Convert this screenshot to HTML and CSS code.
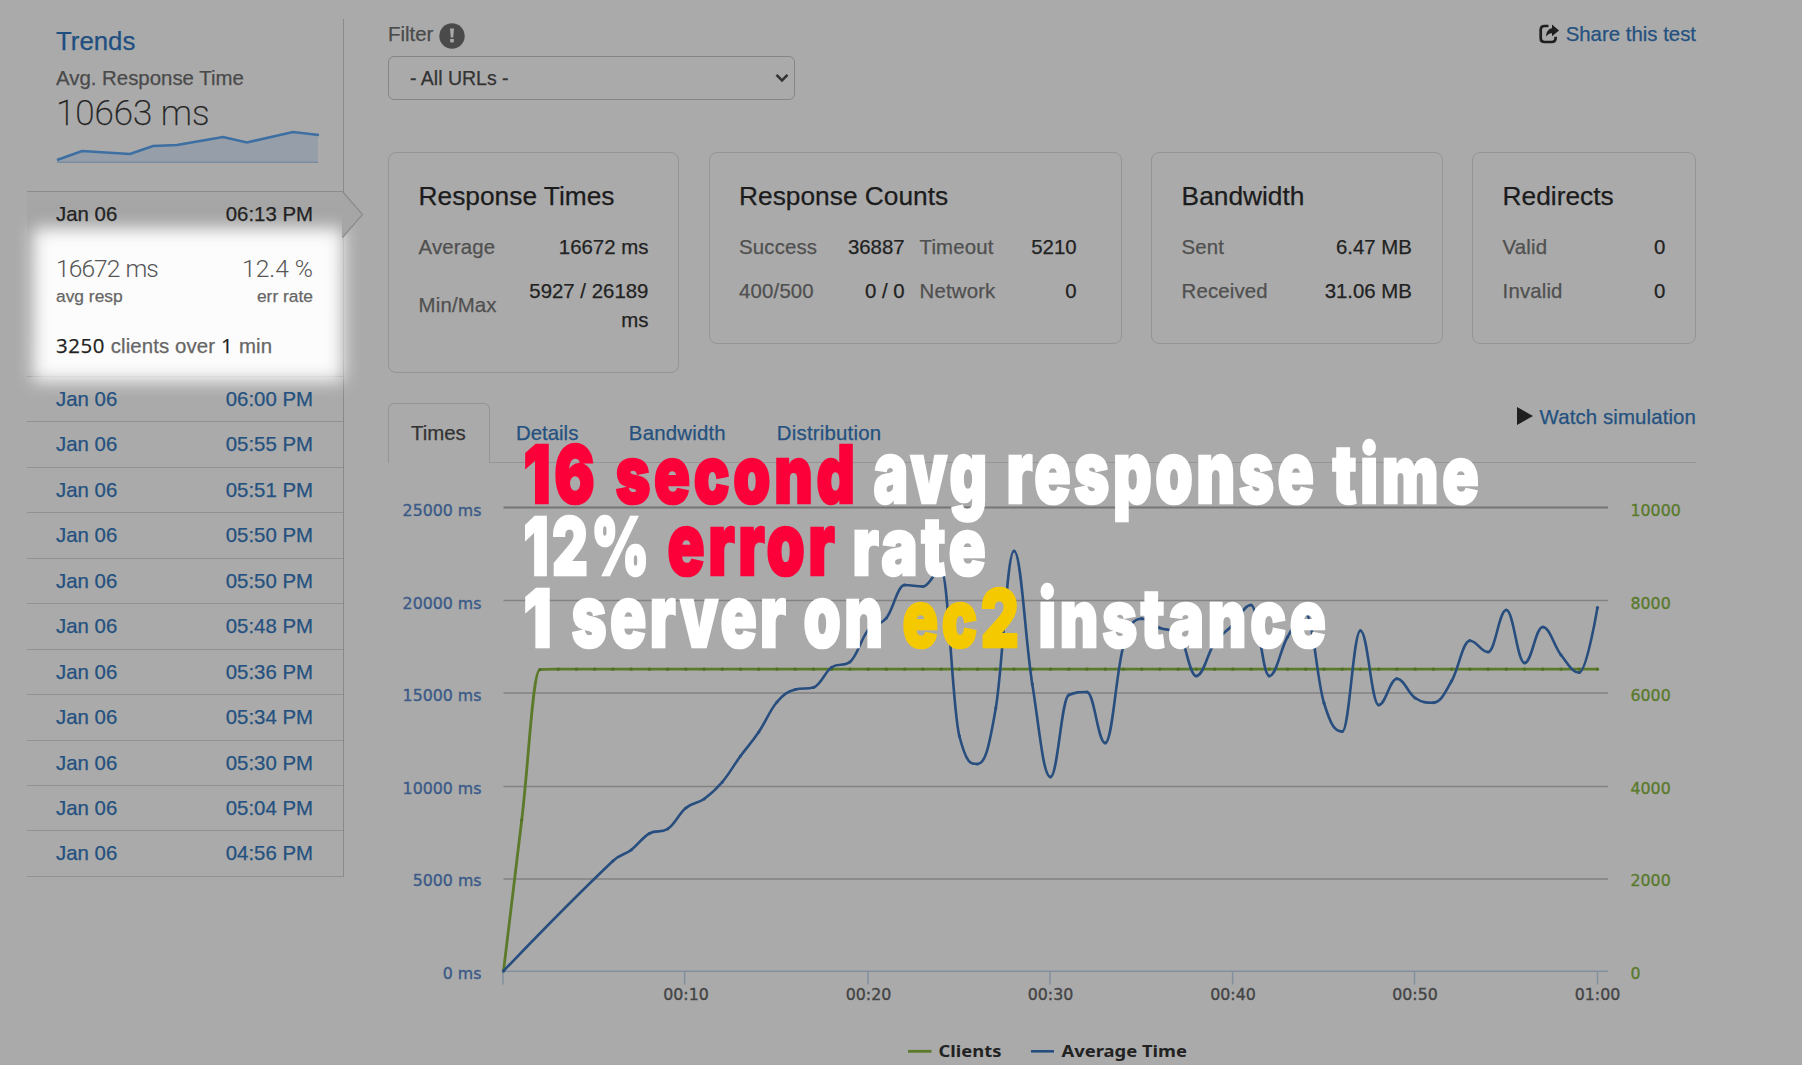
FILE: index.html
```html
<!DOCTYPE html>
<html lang="en">
<head>
<meta charset="utf-8">
<title>Load test results</title>
<link rel="stylesheet" href="styles.css">
</head>
<body>
<div class="page">
  <aside class="sidebar">
    <section class="trends">
      <h2 class="trends-title">Trends</h2>
      <div class="trends-label">Avg. Response Time</div>
      <div class="trends-value">10663 ms</div>
      <svg class="sparkline" width="264" height="34" viewBox="56 130 264 34">
        <path class="spark-area" d="M57 160 82 151 130 154 153 146 177 145 200 141 223 137 247 142.500 293 132 318 135V162.500H57Z"/>
        <path class="spark-base" d="M57 162.300H318"/>
        <path class="spark-line" d="M57 160 82 151 130 154 153 146 177 145 200 141 223 137 247 142.500 293 132 319 135"/>
      </svg>
    </section>
    <section class="run-active">
      <div class="spotlight"></div>
      <svg class="run-arrow" width="22" height="48" viewBox="0 0 22 48"><path class="arrow-fill" d="M0 .5 20.500 23.500 0 46.500Z"/><path class="arrow-line" d="M.5 .5 20.500 23.500 .5 46.500"/></svg>
      <div class="run-line run-head"><span>Jan 06</span><span>06:13 PM</span></div>
      <div class="run-line run-stats"><span>16672 ms</span><span class="rate">12.4 %</span></div>
      <div class="run-line run-captions"><span>avg resp</span><span>err rate</span></div>
      <div class="run-clients"><b>3250</b> clients over <b>1</b> min</div>
    </section>
    <div class="runs">
      <a class="run"><span>Jan 06</span><span>06:00 PM</span></a>
      <a class="run"><span>Jan 06</span><span>05:55 PM</span></a>
      <a class="run"><span>Jan 06</span><span>05:51 PM</span></a>
      <a class="run"><span>Jan 06</span><span>05:50 PM</span></a>
      <a class="run"><span>Jan 06</span><span>05:50 PM</span></a>
      <a class="run"><span>Jan 06</span><span>05:48 PM</span></a>
      <a class="run"><span>Jan 06</span><span>05:36 PM</span></a>
      <a class="run"><span>Jan 06</span><span>05:34 PM</span></a>
      <a class="run"><span>Jan 06</span><span>05:30 PM</span></a>
      <a class="run"><span>Jan 06</span><span>05:04 PM</span></a>
      <a class="run"><span>Jan 06</span><span>04:56 PM</span></a>
    </div>
  </aside>

  <main class="main">
    <header class="top">
      <div class="filter">
        <div class="filter-label">Filter
          <svg width="26" height="26" viewBox="0 0 26 26"><circle cx="13" cy="13" r="12.700" fill="#4a4a4a"/><path fill="#aaa" d="M11 5.500h4l-.8 9h-2.400z"/><rect x="11.200" y="16" width="3.600" height="3.400" fill="#aaa"/></svg>
        </div>
        <div class="select"><span>- All URLs -</span>
          <svg width="14" height="10" viewBox="0 0 14 10"><path d="M1.500 1.800 7 7.300 12.500 1.800" fill="none" stroke="#333" stroke-width="2.600"/></svg>
        </div>
      </div>
      <a class="action">
        <svg width="20" height="20" viewBox="0 0 20 20"><path d="M9.500 2H5.500Q1.700 2 1.700 5.800V14.200Q1.700 18 5.500 18H12.500Q16.600 18 16.600 14V12.800" fill="none" stroke="#1f1f1f" stroke-width="2.700"/><path d="M13 .6 20 6.500 13 12.300V9.200C10.500 9 8.600 10.200 7.200 12.800 7 8 9.500 4.600 13 4.200Z" fill="#1f1f1f"/></svg>
        <span>Share this test</span>
      </a>
    </header>

    <section class="cards">
      <div class="card card-times">
        <h4>Response Times</h4>
        <div class="grid2">
          <span class="label">Average</span><span class="value">16672 ms</span>
          <span class="label">Min/Max</span><span class="value">5927 / 26189 ms</span>
        </div>
      </div>
      <div class="card card-counts">
        <h4>Response Counts</h4>
        <div class="grid4">
          <span class="label">Success</span><span class="value">36887</span><span class="label second">Timeout</span><span class="value">5210</span>
          <span class="label">400/500</span><span class="value">0 / 0</span><span class="label second">Network</span><span class="value">0</span>
        </div>
      </div>
      <div class="card card-bandwidth">
        <h4>Bandwidth</h4>
        <div class="grid2">
          <span class="label">Sent</span><span class="value">6.47 MB</span>
          <span class="label">Received</span><span class="value">31.06 MB</span>
        </div>
      </div>
      <div class="card card-redirects">
        <h4>Redirects</h4>
        <div class="grid2">
          <span class="label">Valid</span><span class="value">0</span>
          <span class="label">Invalid</span><span class="value">0</span>
        </div>
      </div>
    </section>

    <nav class="tabs">
      <a class="tab tab-active">Times</a>
      <a class="tab">Details</a>
      <a class="tab">Bandwidth</a>
      <a class="tab">Distribution</a>
      <a class="action watch">
        <svg width="16" height="18" viewBox="0 0 16 18"><path d="M0 0 16 9 0 18Z" fill="#1f1f1f"/></svg>
        <span>Watch simulation</span>
      </a>
    </nav>

    <svg class="chart" width="1308" height="602" viewBox="388 463 1308 602">
      <g class="gridlines">
        <path class="grid-top" d="M503.500 507.500H1608"/>
        <path d="M503.500 600.500H1608M503.500 693H1608M503.500 786.500H1608M503.500 879H1608"/>
      </g>
      <path class="axis" d="M503 971.300H1608M503 971V984.500M684.600 971V984.500M868 971V984.500M1050 971V984.500M1232.600 971V984.500M1414.500 971V984.500M1597.500 971V984.500"/>
      <g class="axis-time">
        <text x="481.500" y="516">25000 ms</text><text x="481.500" y="608.500">20000 ms</text><text x="481.500" y="701">15000 ms</text>
        <text x="481.500" y="793.500">10000 ms</text><text x="481.500" y="885.500">5000 ms</text><text x="481.500" y="979">0 ms</text>
      </g>
      <g class="axis-clients">
        <text x="1630.500" y="516">10000</text><text x="1630.500" y="608.500">8000</text><text x="1630.500" y="701">6000</text>
        <text x="1630.500" y="793.500">4000</text><text x="1630.500" y="885.500">2000</text><text x="1630.500" y="979">0</text>
      </g>
      <g class="axis-x">
        <text x="686" y="999.500">00:10</text><text x="868.500" y="999.500">00:20</text><text x="1050.500" y="999.500">00:30</text>
        <text x="1233" y="999.500">00:40</text><text x="1415" y="999.500">00:50</text><text x="1597.500" y="999.500">01:00</text>
      </g>
      <g id="clients" class="series clients"></g>
      <g id="times" class="series times"></g>
      <path class="key-clients" d="M908 1051.300H931.500"/>
      <path class="key-times" d="M1031 1051.300H1054"/>
      <g class="legend">
        <text x="938.500" y="1056.500" textLength="63" lengthAdjust="spacingAndGlyphs">Clients</text>
        <text x="1061.500" y="1056.500" textLength="125.500" lengthAdjust="spacingAndGlyphs">Average Time</text>
      </g>
    </svg>
  </main>

  <svg class="headline" width="1000" height="290" viewBox="500 400 1000 290">
    <g class="red">
      <text x="523.500" y="502.500" textLength="75">16</text>
      <text x="615.500" y="502.500" textLength="243">second</text>
      <text class="tall" x="667.500" y="574.500" textLength="171">error</text>
    </g>
    <g class="white">
      <text class="tall" x="873.500" y="502.500" textLength="117">avg</text>
      <text class="tall" x="1006.500" y="502.500" textLength="311">response</text>
      <text x="1332.500" y="502.500" textLength="150">time</text>
      <text x="523.500" y="574.500" textLength="129">12%</text>
      <text x="852.500" y="574.500" textLength="137">rate</text>
      <text x="523.500" y="646.500" textLength="32">1</text>
      <text class="tall" x="571.500" y="646.500" textLength="218">server</text>
      <text class="tall" x="803.500" y="646.500" textLength="83">on</text>
      <text x="1038.500" y="646.500" textLength="291">instance</text>
    </g>
    <g class="yellow"><text x="902.500" y="646.500" textLength="120">ec2</text></g>
  </svg>
</div>
<script src="chart.js"></script>
</body>
</html>
```
FILE: styles.css
```css
* { box-sizing: border-box; }
body {
  margin: 0;
  background: #aaa;
  color: #222;
  font: 20.4px/29.2px "Liberation Sans", Arial, sans-serif;
  -webkit-text-stroke: .25px;
}
.page {
  position: relative;
  display: flex;
  width: 1802px;
  height: 1065px;
  overflow: hidden;
}
h2, h4 { margin: 0; font-weight: 400; }

/* Sidebar */
.sidebar {
  width: 317px;
  height: 858px;
  margin: 19px 44px 0 27px;
  border-right: 1.5px solid #8a8a8a;
}
.trends { height: 172px; padding: 7px 0 0 29px; }
.trends-title { font-size: 25.8px; line-height: 31px; color: #1e4f80; }
.trends-label { margin-top: 7px; color: #4a4a4a; }
.trends-value {
  position: relative;
  top: 1px;
  margin-top: 3px;
  font: 200 35px/34px Roboto, sans-serif;
  color: #222;
}
.sparkline { display: block; }
.spark-area { fill: #959ea9; }
.spark-base { stroke: #7a8da0; stroke-width: 1.5; }
.spark-line { fill: none; stroke: #3d6fa3; stroke-width: 2.6; }

.run-active {
  position: relative;
  height: 186px;
  padding: 8px 30px 0 29px;
  border-top: 1.3px solid #8c8c8c;
  border-bottom: 1.3px solid #909090;
  background: linear-gradient(#a7a7a7, #a3a3a3 34px, #a7a7a7);
}
.spotlight {
  position: absolute;
  left: 6px;
  top: 36px;
  width: 310px;
  height: 153px;
  background: #fcfcfc;
  filter: blur(8.5px);
}
.run-arrow { position: absolute; left: 315px; top: -1px; }
.arrow-fill { fill: #a6a6a6; }
.arrow-line { fill: none; stroke: #8c8c8c; stroke-width: 1.3; }
.run-line { position: relative; display: flex; justify-content: space-between; }
.run-stats {
  margin-top: 25px;
  font: 300 24.6px/29px Roboto, sans-serif;
  letter-spacing: -.95px;
  word-spacing: 1px;
  -webkit-text-stroke: 0;
  color: #555;
}
.rate { letter-spacing: 0; word-spacing: 0; }
.run-captions { margin-top: -1px; font-size: 17.4px; line-height: 28px; color: #666; }
.run-clients { position: relative; margin-top: 22px; color: #666; letter-spacing: .1px; }
.run-clients b {
  font-family: "Open Sans", sans-serif;
  font-weight: 500;
  letter-spacing: .6px;
  line-height: 20px;
  color: #222;
}
.runs { position: relative; }
.run {
  display: flex;
  justify-content: space-between;
  height: 45.45px;
  padding: 8px 30px 0 29px;
  border-bottom: 1.5px solid #919191;
  color: #24517f;
}

/* Main column */
.main { display: flex; flex-direction: column; width: 1308px; }
.top { display: flex; justify-content: space-between; height: 152px; padding-top: 20px; }
.filter-label { display: flex; align-items: center; gap: 6px; color: #4a4a4a; }
.filter-label svg { margin-top: 2px; }
.select {
  display: flex;
  align-items: center;
  justify-content: space-between;
  width: 407px;
  height: 44px;
  margin-top: 7px;
  padding: 0 5px 0 21px;
  border: 1.5px solid #858585;
  border-radius: 6px;
  font-size: 19.5px;
  color: #333;
}
.action { display: flex; align-items: center; gap: 7px; height: 29px; color: #24517f; }
.action svg { margin-top: -1px; }

.cards {
  display: grid;
  grid-template-columns: 291px 413px 291.5px 224px;
  column-gap: 29.5px;
  align-items: start;
  height: 250px;
}
.card {
  padding: 29.4px 29.6px;
  border: 1.4px solid #959595;
  border-radius: 8px;
}
.card h4 { margin-bottom: 14.4px; font-size: 26.3px; line-height: 28.6px; color: #1c1c1c; }
.label, .value { padding: 7.4px 0; }
.label { color: #505050; letter-spacing: .15px; }
.value { text-align: right; color: #222; }
.grid2 { display: grid; grid-template-columns: 95px 1fr; align-items: center; }
.grid4 { display: grid; grid-template-columns: 85px 80.5px 95px 77px; align-items: center; }
.second { padding-left: 15px; }

.tabs {
  display: flex;
  align-items: flex-end;
  height: 61px;
}
.tab {
  height: 60px;
  padding: 16px 20.5px 0 26px;
  border-bottom: 1.4px solid #959595;
  color: #24517f;
}
.tab:nth-child(3) { padding-left: 30px; letter-spacing: .2px; }
.tab:nth-child(4) { padding-left: 30.5px; letter-spacing: .2px; }
.tab-active {
  width: 102px;
  padding-top: 15px;
  padding-left: 22px;
  border: 1.4px solid #959595;
  border-bottom: 0;
  border-radius: 6px 6px 0 0;
  color: #333;
}
.watch {
  flex: 1;
  justify-content: flex-end;
  align-items: flex-start;
  height: 61px;
  border-bottom: 1.4px solid #959595;
  letter-spacing: .12px;
}
.watch span { padding-top: 1px; }
.watch svg { margin-top: 5px; }

/* Chart */
.chart { display: block; font: 15.8px "DejaVu Sans", sans-serif; }
.gridlines { stroke: #838383; stroke-width: 1.5; }
.grid-top { stroke: #757575; stroke-width: 2.2; }
.axis { stroke: #82909d; stroke-width: 1.5; }
.axis-time { fill: #3a5a88; stroke: #3a5a88; text-anchor: end; }
.axis-clients { fill: #5a7a2c; stroke: #5a7a2c; }
.axis-x { fill: #444; stroke: #444; text-anchor: middle; }
.axis-time, .axis-clients, .axis-x { stroke-width: .35; }
.legend { fill: #222; font: 700 16.2px "Noto Sans", sans-serif; -webkit-text-stroke: 0; }
.series path, .key-clients, .key-times { fill: none; stroke-width: 2.6; stroke-linejoin: round; }
.clients path, .key-clients { stroke: #5b7a2a; stroke-width: 2.8; }
.times path, .key-times { stroke: #274e7e; }
.clients circle { fill: #4f6f22; }
.times circle { fill: #274e7e; }

/* Caption over the chart */
.headline {
  position: absolute;
  left: 500px;
  top: 400px;
  font: 900 80px Inter, sans-serif;
}
.headline text { stroke-width: 2.6; letter-spacing: 5px; }
.headline .tall { font-size: 86px; }
.red { fill: #fb0039; stroke: #fb0039; }
.white { fill: #fff; stroke: #fff; }
.yellow { fill: #f4c900; stroke: #f4c900; }
```
FILE: chart.js
```js
const STEP = 18.233, LEFT = 503.5;
const clientY = [971, 820, 669.6];
for (let i = 3; i <= 60; i++) clientY.push(669.2);
const early = [[0, 971]];
const timeY = [861, 850, 833.5, 829, 808, 799, 782, 756, 732, 702, 689.5, 687.5, 667.3,
  662, 630, 618, 585, 586.5, 570, 736, 764, 708, 551, 684, 777, 695, 692, 743, 646, 618.7,
  628, 633, 676, 643, 625, 605, 676, 637, 614, 703, 731.5, 630.7, 705, 678.7, 698, 702.7,
  681, 640.7, 652, 610, 663, 627, 655, 672.5, 607.6];

const clients = clientY.map((y, i) => [LEFT + i * STEP, y]);
const times = early.map(([i, y]) => [LEFT + i * STEP, y])
  .concat(timeY.map((y, i) => [LEFT + (i + 6) * STEP, y]));

// Spline whose control points never overshoot the neighbouring values.
function spline(p) {
  let d = `M${p[0]}`, prevRight = p[0];
  for (let i = 1; i < p.length; i++) {
    const [x, y] = p[i];
    let left = [x, y], right = [x, y];
    if (i < p.length - 1) {
      const [lx, ly] = p[i - 1], [nx, ny] = p[i + 1];
      const ax = (1.5 * x + lx) / 2.5, bx = (1.5 * x + nx) / 2.5;
      let ay = (1.5 * y + ly) / 2.5, by = (1.5 * y + ny) / 2.5;
      const fix = (by - ay) * (bx - x) / (bx - ax) + y - by;
      ay += fix; by += fix;
      if (ay > ly && ay > y) { ay = Math.max(ly, y); by = 2 * y - ay; }
      else if (ay < ly && ay < y) { ay = Math.min(ly, y); by = 2 * y - ay; }
      if (by > ny && by > y) { by = Math.max(ny, y); ay = 2 * y - by; }
      else if (by < ny && by < y) { by = Math.min(ny, y); ay = 2 * y - by; }
      left = [ax, ay]; right = [bx, by];
    }
    d += `C${prevRight} ${left} ${x},${y}`;
    prevRight = right;
  }
  return d;
}

function draw(id, points) {
  document.getElementById(id).innerHTML = `<path d="${spline(points)}"/>` +
    points.map(([x, y]) => `<circle cx="${x}" cy="${y}" r="1.6"/>`).join('');
}
draw('clients', clients);
draw('times', times);

for (const t of document.querySelectorAll('.headline text')) {
  t.setAttribute('lengthAdjust', 'spacingAndGlyphs');
}
```
